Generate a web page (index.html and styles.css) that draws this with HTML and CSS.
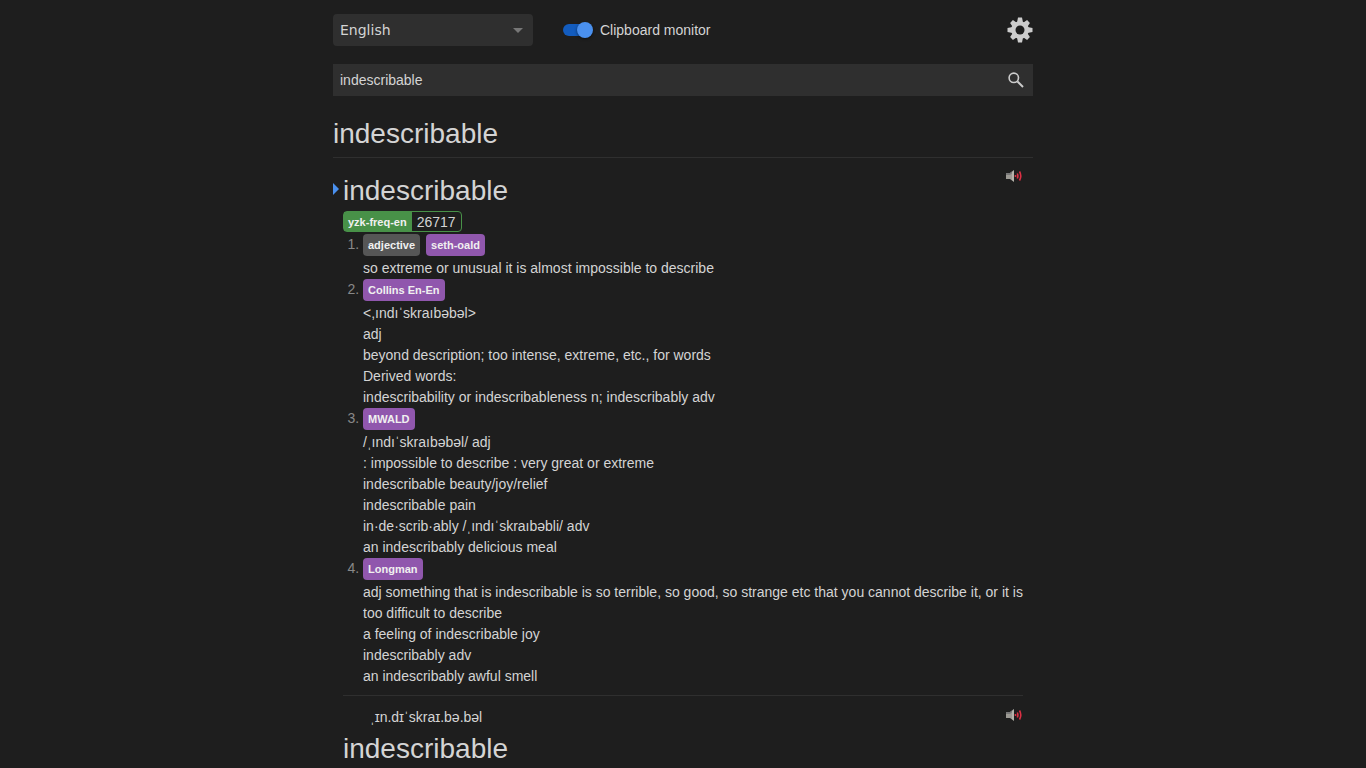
FILE: index.html
```html
<!DOCTYPE html>
<html lang="en">
<head>
<meta charset="utf-8">
<title>Dictionary search</title>
<link rel="stylesheet" href="styles.css">
</head>
<body>
<svg class="sprite" aria-hidden="true">
  <symbol id="speaker" viewBox="0 0 16 16">
    <path d="M0 5h4l4-3v12l-4-3H0z" fill="#9c9a94"/>
    <path d="M0 5h4l4-3v1.500L4 7H0z" fill="#777"/>
    <path d="M6 4l2-1.500v11L6 12z" fill="#b5b2aa"/>
    <path d="M9.500 7v2M11.300 5.500q1.200 2.500 0 5M13.500 3.500q2.600 4.500 0 9" fill="none" stroke="#dc3044" stroke-width="1.600"/>
  </symbol>
</svg>
<main class="page">
  <header class="toolbar">
    <div class="select-wrap">
      <select class="profile" aria-label="Profile"><option>English</option></select>
      <svg class="select-arrow" viewBox="0 0 10 5" aria-hidden="true"><path d="M0 0h10L5 5z" fill="#777"/></svg>
    </div>
    <label class="monitor"><input class="toggle" type="checkbox" checked>Clipboard monitor</label>
    <button class="settings" type="button" aria-label="Settings">
      <svg viewBox="-13 -13 26 26" aria-hidden="true">
        <g fill="#ccc">
          <path d="M-2-12.500h4l1 5v15l-1 5h-4l-1-5v-15zM-12.500-2v4l5 1h15l5-1v-4l-5-1h-15z"/>
          <path d="M-2-12h4l1 5v14l-1 5h-4l-1-5v-14zM-12-2v4l5 1h14l5-1v-4l-5-1h-14z" transform="rotate(45)"/>
          <circle r="8.800"/>
        </g>
        <circle r="4.500" fill="#1e1e1e"/>
      </svg>
    </button>
  </header>
  <form class="search">
    <input class="search-text" type="text" value="indescribable" aria-label="Search">
    <button class="search-button" type="button" aria-label="Search">
      <svg viewBox="0 0 16 16" fill="none" stroke="#ccc" aria-hidden="true"><circle cx="5.800" cy="5.800" r="4.700" stroke-width="1.600"/><path d="M9.500 9.500l5.500 5.500" stroke-width="2"/></svg>
    </button>
  </form>
  <h1 class="query">indescribable</h1>
  <article class="entry">
    <div class="entry-head">
      <svg class="current" viewBox="0 0 6 12" aria-hidden="true"><path d="M0 0l6 6-6 6z" fill="#4a90ee"/></svg>
      <h2 class="term">indescribable</h2>
      <button class="audio" type="button" aria-label="Play audio"><svg aria-hidden="true"><use href="#speaker"/></svg></button>
    </div>
    <div class="frequency"><span class="frequency-name">yzk-freq-en</span><span class="frequency-value">26717</span></div>
    <ol class="definitions">
      <li><div class="tags"><span class="tag tag-pos">adjective</span><span class="tag">seth-oald</span></div>
        <p class="gloss">so extreme or unusual it is almost impossible to describe</p></li>
      <li><div class="tags"><span class="tag">Collins En-En</span></div>
        <p class="gloss">&lt;,ındıˈskraıbəbəl&gt;<br>adj<br>beyond description; too intense, extreme, etc., for words<br>Derived words:<br>indescribability or indescribableness n; indescribably adv</p></li>
      <li><div class="tags"><span class="tag">MWALD</span></div>
        <p class="gloss">/ˌındıˈskraıbəbəl/ adj<br>: impossible to describe : very great or extreme<br>indescribable beauty/joy/relief<br>indescribable pain<br>in·de·scrib·ably /ˌındıˈskraıbəbli/ adv<br>an indescribably delicious meal</p></li>
      <li><div class="tags"><span class="tag">Longman</span></div>
        <p class="gloss">adj something that is indescribable is so terrible, so good, so strange etc that you cannot describe it, or it is too difficult to describe<br>a feeling of indescribable joy<br>indescribably adv<br>an indescribably awful smell</p></li>
    </ol>
  </article>
  <article class="entry entry-next">
    <div class="reading-row">
      <span class="reading">ˌɪn.dɪˈskraɪ.bə.bəl</span>
      <button class="audio" type="button" aria-label="Play audio"><svg aria-hidden="true"><use href="#speaker"/></svg></button>
    </div>
    <h2 class="term">indescribable</h2>
  </article>
</main>
</body>
</html>
```

FILE: styles.css
```css
* { box-sizing: border-box; }
html { overflow: hidden; background: #1e1e1e; }
body {
  margin: 0;
  color: #d4d4d4;
  font: 14px/21px "Liberation Sans", Arial, sans-serif;
}
button { padding: 0; border: 0; background: none; cursor: pointer; }
button svg { display: block; width: 100%; height: 100%; }
.sprite { display: none; }
.page { max-width: 700px; margin: 0 auto; }

.toolbar { display: flex; align-items: center; height: 60px; }
.select-wrap { position: relative; width: 200px; }
.profile {
  display: block;
  width: 100%;
  height: 32px;
  padding: 0 7px;
  border: 0;
  border-radius: 4px;
  appearance: none;
  background: #2f2f2f;
  color: #d4d4d4;
  font: 14px "DejaVu Sans", sans-serif;
}
.select-arrow { position: absolute; top: 14px; right: 10px; width: 10px; height: 5px; pointer-events: none; }
.monitor { display: flex; align-items: center; gap: 7px; margin-left: 30px; }
.toggle {
  display: grid;
  align-items: center;
  width: 30px;
  height: 16px;
  margin: 0;
  appearance: none;
}
.toggle::before, .toggle::after { content: ""; grid-area: 1 / 1; }
.toggle::before { width: 28px; height: 12px; border-radius: 6px; background: #135cbe; }
.toggle::after {
  justify-self: end;
  width: 16px;
  height: 16px;
  border-radius: 50%;
  background: #4a90ee;
  box-shadow: 0 1px 3px #0008;
}
.settings { width: 26px; height: 26px; margin-left: auto; }

.search { display: flex; height: 32px; margin-top: 4px; background: #2f2f2f; }
.search-text {
  flex: 1;
  min-width: 0;
  padding: 0 7px;
  border: 0;
  outline: 0;
  background: none;
  color: #d4d4d4;
  font: inherit;
}
.search-button { width: 34px; padding: 8px 9px; }

.query, .term { margin: 0; font-size: 28px; font-weight: 400; }
.query { padding: 21px 0 7px; border-bottom: 1px solid #2f2f2f; line-height: 33px; }
.entry { padding: 10px 10px 8px; }
.entry-head { display: flex; height: 43px; margin-left: -10px; }
.current { width: 6px; height: 12px; margin: 15px 4px 0 0; }
.term { line-height: 42px; }
.entry-head .term { line-height: 46px; }
.audio { width: 16px; height: 16px; margin: 0 1px 0 auto; }

.frequency {
  display: flex;
  width: max-content;
  height: 21px;
  border: 1px solid #489148;
  border-radius: 4px;
}
.frequency-name { padding: 0 5px 0 4px; background: #489148; color: #f0f0f0; font-size: 11px; font-weight: 700; line-height: 20px; }
.frequency-value { padding: 0 5px; line-height: 20px; }

.definitions { margin: 2px 0 0; padding-left: 20px; }
.definitions li::marker { color: #888; }
.tags { display: inline-flex; gap: 6px; height: 24px; vertical-align: top; }
.tag {
  height: 22px;
  padding: 0 5px;
  border-radius: 4px;
  background: #9057ad;
  color: #f0f0f0;
  font-size: 11px;
  font-weight: 700;
  line-height: 22px;
}
.tag-pos { background: #565656; }
.gloss { margin: 0; }

.entry-next { padding-top: 0; }
.entry-next::before { content: ""; display: block; border-top: 1px solid #2f2f2f; }
.reading-row { display: flex; margin-top: 11px; }
.reading { padding-left: 27px; }
```
